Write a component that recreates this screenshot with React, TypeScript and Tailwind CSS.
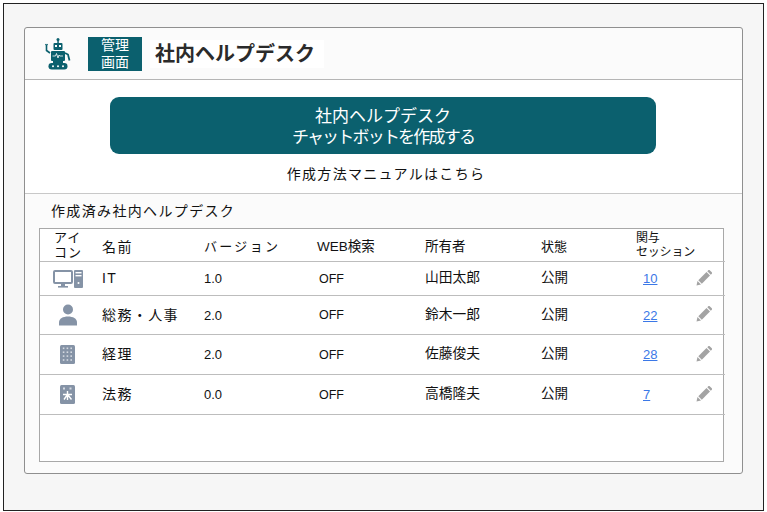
const rows = [
  { icon: 'pc', name: 'IT', version: '1.0', owner: '山田太郎', count: '10', height: 'h-[34px]' },
  { icon: 'user', name: '総務・人事', version: '2.0', owner: '鈴木一郎', count: '22', height: 'h-[39px]' },
  { icon: 'calc', name: '経理', version: '2.0', owner: '佐藤俊夫', count: '28', height: 'h-[40px]' },
  { icon: 'law', name: '法務', version: '0.0', owner: '高橋隆夫', count: '7', height: 'h-[40px]' },
];

function RobotIcon() {
  return (
    <svg width="26" height="32" viewBox="0 0 26 32" fill="#0b606e">
      <rect x="11.5" y="0" width="3" height="3" rx="1.5" />
      <rect x="12.3" y="2" width="1.5" height="3" />
      <rect x="8.5" y="5" width="9" height="7" rx="1" />
      <rect x="10" y="7" width="2" height="2" fill="#fff" />
      <rect x="14" y="7" width="2" height="2" fill="#fff" />
      <rect x="6" y="13" width="14" height="10" rx="1" />
      <path d="M7.500 18h3l1-2.500 1.500 4.500 1-3 .7 1h3.300" fill="none" stroke="#fff" strokeWidth="0.8" />
      <path d="M1.500 8v4.500l3.500 2.500" fill="none" stroke="#0b606e" strokeWidth="1.6" />
      <path d="M.5 6l1 2 1-2" fill="none" stroke="#0b606e" strokeWidth="1.2" />
      <path d="M20 15l3 1.500 1.500 6" fill="none" stroke="#0b606e" strokeWidth="1.8" />
      <rect x="8" y="23" width="10" height="2" />
      <rect x="3.5" y="25" width="19" height="6.5" rx="3.2" />
      <circle cx="8" cy="28.2" r="1" fill="#fff" />
      <circle cx="13" cy="28.2" r="1" fill="#fff" />
      <circle cx="18" cy="28.2" r="1" fill="#fff" />
    </svg>
  );
}

function RowIcon({ type }: { type: string }) {
  const c = '#8593a6';
  if (type === 'pc') {
    return (
      <svg width="30" height="18" viewBox="0 0 30 18">
        <rect x="1" y="1" width="18" height="12" rx="1" fill="#fff" stroke={c} strokeWidth="2" />
        <rect x="8" y="13" width="4" height="3" fill={c} />
        <rect x="5" y="16" width="10" height="1.6" fill={c} />
        <rect x="21" y="0" width="9" height="18" rx="1" fill={c} />
        <rect x="22.5" y="2" width="6" height="1.4" fill="#fff" />
        <rect x="22.5" y="5" width="6" height="1.4" fill="#fff" />
        <circle cx="25.5" cy="13" r="1" fill="#fff" />
      </svg>
    );
  }
  if (type === 'user') {
    return (
      <svg width="20" height="22" viewBox="0 0 20 22" fill={c}>
        <circle cx="10" cy="5.5" r="5" />
        <path d="M1 21.500v-3C1 14.500 5 12.500 10 12.500s9 2 9 6v3z" />
      </svg>
    );
  }
  if (type === 'calc') {
    const dots = [];
    for (let y = 0; y < 4; y++) {
      for (let x = 0; x < 3; x++) {
        dots.push(<rect key={`${x}-${y}`} x={2.800 + x * 3.800} y={2.500 + y * 3.900} width="1.600" height="1.600" fill="#d5dae1" />);
      }
    }
    return (
      <svg width="15" height="19" viewBox="0 0 15 19">
        <rect width="15" height="19" rx="1.500" fill={c} />
        {dots}
      </svg>
    );
  }
  return (
    <svg width="15" height="19" viewBox="0 0 15 19">
      <rect width="15" height="19" rx="1.500" fill={c} />
      <rect x="3" y="2.500" width="2" height="2" fill="#d5dae1" />
      <rect x="9.500" y="2.500" width="2" height="2" fill="#d5dae1" />
      <path d="M7.500 6v9M3 9.500h9M4 14.500l3.500-5 4 5" fill="none" stroke="#fff" strokeWidth="1.400" />
    </svg>
  );
}

function Pencil() {
  return (
    <svg width="16" height="16" viewBox="0 0 16 16" fill="#a3a3a3" className="-mt-[2px]">
      <path d="M0.500 15.500l1-4.500 3.500 3.500z" />
      <path d="M2.300 10.200L10.500 2l3.500 3.500-8.200 8.200z" />
      <path d="M11.300 1.200l1-1c.4-.4 1-.4 1.400 0l2.100 2.100c.4.400.4 1 0 1.400l-1 1z" />
    </svg>
  );
}

export default function App() {
  return (
    <div
      className="w-[767px] h-[512px] bg-white pl-[3px] pt-[3px] pr-[3px] pb-[1px] text-[#111]"
      style={{ fontFamily: '"Liberation Sans", "Noto Sans CJK JP", sans-serif' }}
    >
      <div className="h-full border border-[#222] bg-[#f6f6f6] pl-5 pr-5 pt-[23px]">
        <div className="w-[719px] h-[447px] border border-[#8f8f8f] rounded-[3px] bg-[#fbfbfb] flex flex-col">
          {/* Header */}
          <div className="h-[52px] shrink-0 border-b border-[#b5b5b5] flex items-center pl-[20px] pt-[1px]">
            <RobotIcon />
            <div className="ml-[17px] w-[54px] h-[34px] bg-[#0b606e] text-white text-[14px] leading-[17px] text-center">
              管理
              <br />
              画面
            </div>
            <div className="ml-2 w-[174px] h-[28px] bg-white pl-[5px] text-[20px] leading-[28px] font-bold text-[#2b2b2b] whitespace-nowrap">
              社内ヘルプデスク
            </div>
          </div>

          {/* Create button */}
          <div className="h-[114px] shrink-0 border-b border-[#c8c8c8] bg-white flex flex-col items-center pt-[17px] pr-[1px]">
            <button className="w-[546px] h-[57px] rounded-[9px] bg-[#0b606e] text-white text-[17px] leading-[21px] pt-[3px]">
              社内ヘルプデスク
              <br />
              <span className="tracking-[-1.800px]">チャットボットを作成する</span>
            </button>
            <div className="mt-[10px] ml-[6px] text-[14px] leading-5 tracking-[1.300px]">作成方法マニュアルはこちら</div>
          </div>

          <div className="pl-[26px] pt-[7px] h-[34px] shrink-0 text-[14px] leading-5 tracking-[1.350px]">作成済み社内ヘルプデスク</div>

          {/* Table */}
          <div className="ml-[14px] w-[685px] h-[234px] border border-[#a8a8a8] bg-white text-[14px]">
            <div className="h-[33px] flex items-center w-[685px] border-b border-[#bdbdbd]">
              <div className="w-[62px] pl-[14px] text-[13px] leading-[15px] tracking-[1px]">アイ<br />コン</div>
              <div className="w-[102px] pt-[4px] tracking-[1.400px]">名前</div>
              <div className="w-[113px] pt-[4px] text-[13px] tracking-[2.300px]">バージョン</div>
              <div className="w-[108px] pt-[4px] text-[13.500px]">WEB検索</div>
              <div className="w-[116px] pt-[4px] text-[13.500px]">所有者</div>
              <div className="w-[95px] pt-[4px] text-[13px]">状態</div>
              <div className="leading-[14px] text-[12px] tracking-[-0.200px]">関与<br />セッション</div>
            </div>
            {rows.map((row) => (
              <div key={row.name} className={`${row.height} flex items-center w-[685px] border-b border-[#bdbdbd]`}>
                <div className="w-[62px] flex justify-center pr-[7px]"><RowIcon type={row.icon} /></div>
                <div className="w-[102px] tracking-[1.400px]">{row.name}</div>
                <div className="w-[113px] text-[13px] pt-[1px]">{row.version}</div>
                <div className="w-[108px] text-[12.500px] pl-[2px] pt-[1px]">OFF</div>
                <div className="w-[116px] text-[13.750px]">{row.owner}</div>
                <div className="w-[95px] text-[13.500px]">公開</div>
                <div className="w-[60px] pl-[7px]">
                  <a href="#" className="text-[#3b78e7] underline text-[13px]">{row.count}</a>
                </div>
                <Pencil />
              </div>
            ))}
          </div>
        </div>
      </div>
    </div>
  );
}
